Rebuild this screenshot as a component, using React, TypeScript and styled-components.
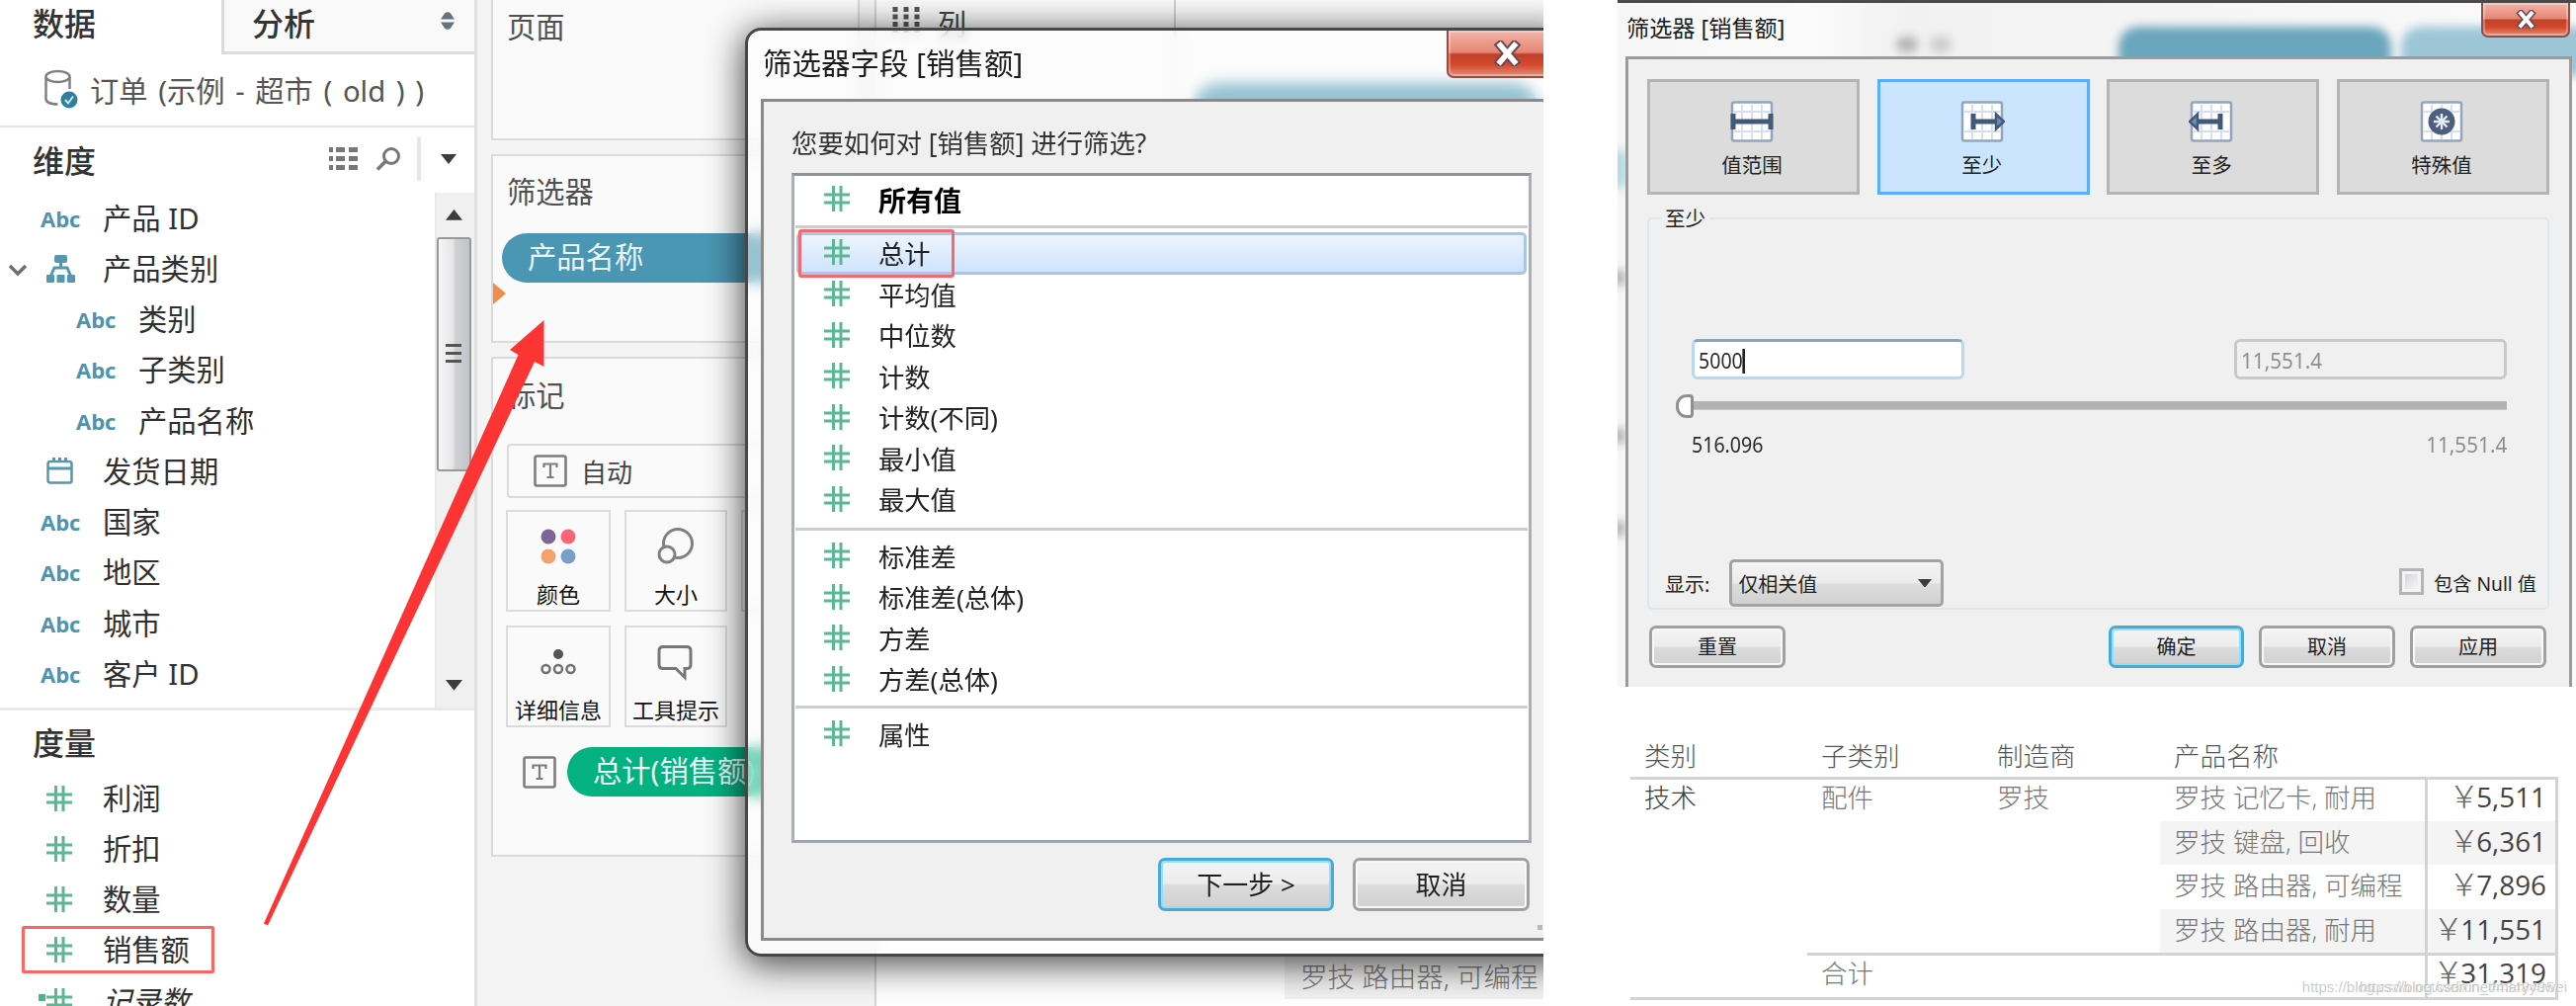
import React from 'react';
import styled, { createGlobalStyle, css } from 'styled-components';

const GlobalStyle = createGlobalStyle`
  *,
  *::after {
    box-sizing: border-box;
  }

  body {
    margin: 0;
    background: #fff;
    font-family: 'Noto Sans', 'Noto Sans CJK SC', sans-serif;
    color: #333;
  }
`;

const Page = styled.div`
  display: flex;
  gap: 75px;
  width: 2607px;
  height: 1018px;
  overflow: hidden;
`;

const Workspace = styled.section`
  position: relative;
  display: flex;
  width: 1562px;
  height: 1018px;
  overflow: hidden;
  background: #f4f4f4;
`;

/* ---------- data pane ---------- */

const DataPane = styled.aside`
  display: flex;
  flex-direction: column;
  flex: none;
  width: 483px;
  height: 1018px;
  overflow: hidden;
  background: #fff;
  border-right: 3px solid #dfe0e0;
`;

const Tabs = styled.div`
  display: flex;
  flex: none;
  height: 55px;
`;

const Tab = styled.div<{ $active?: boolean }>`
  display: flex;
  justify-content: space-between;
  padding: 0 20px 0 ${(p) => (p.$active ? 33 : 28)}px;
  width: ${(p) => (p.$active ? 224 : 256)}px;
  font-size: 32px;
  font-weight: 500;
  line-height: 48px;
  ${(p) =>
    !p.$active &&
    css`
      background: #f9f9f9;
      border-left: 3px solid #dcdcdc;
      border-bottom: 3px solid #dcdcdc;
    `}

  svg {
    margin-top: 12px;
  }
`;

const Source = styled.div`
  display: flex;
  flex: none;
  align-items: center;
  gap: 12px;
  height: 74px;
  padding: 0 0 2px 45px;
  border-bottom: 2px solid #e6e6e6;
  font-size: 29.3px;
  word-spacing: 3px;
  color: #555;
  white-space: pre;
`;

const PaneHeader = styled.div<{ $height: number }>`
  display: flex;
  flex: none;
  align-items: center;
  height: ${(p) => p.$height}px;
  padding: 0 18px 2px 33px;
  font-size: 32px;
  font-weight: 500;
`;

const HeaderTools = styled.div`
  display: flex;
  align-items: center;
  margin-left: auto;
`;

const Divider = styled.span`
  width: 4px;
  height: 44px;
  margin: 0 20px 0 17px;
  background: #e6e6e6;
`;

const DimensionBody = styled.div`
  display: flex;
  flex: none;
  height: 524px;
  border-bottom: 3px solid #eaeaea;
`;

const FieldList = styled.div`
  flex: 1;
`;

const FieldRow = styled.div<{ $nested?: boolean; $italic?: boolean; $marked?: boolean }>`
  position: relative;
  display: flex;
  flex: none;
  align-items: center;
  height: 51.25px;
  padding-left: ${(p) => (p.$nested ? 36 : 0)}px;
  font-size: 29.3px;
  line-height: 40px;
  font-style: ${(p) => (p.$italic ? 'italic' : 'normal')};
  color: #2f2f2f;

  ${(p) =>
    p.$marked &&
    css`
      &::after {
        content: '';
        position: absolute;
        left: 22px;
        top: 1px;
        width: 195px;
        height: 48px;
        border: 3px solid #ff6464;
        border-radius: 2px;
      }
    `}
`;

const FieldIcon = styled.span`
  position: relative;
  display: flex;
  align-items: center;
  justify-content: flex-start;
  width: 104px;
  padding-left: 41px;

  svg {
    margin-left: 6px;
  }
`;

const Abc = styled.span`
  font-family: 'Open Sans', sans-serif;
  font-size: 22px;
  font-weight: 700;
  color: #4f93ad;
`;

const Expander = styled.span`
  position: absolute;
  left: -1px;
  top: 9px;
  display: flex;
`;

const CalcMark = styled.span`
  position: absolute;
  left: 39px;
  top: 6px;
  width: 7px;
  height: 7px;
  background: #4fb48e;
`;

const ScrollBar = styled.div`
  display: flex;
  flex-direction: column;
  align-items: center;
  justify-content: space-between;
  width: 40px;
  padding: 17px 4px 17px 0;
  background: #f0f0f0;
  border-left: 2px solid #e8e8e8;
`;

const Thumb = styled.div`
  display: flex;
  align-items: center;
  justify-content: center;
  width: 35px;
  height: 237px;
  margin: 17px 0 auto;
  border: 2px solid #999;
  border-radius: 3px;
  background: linear-gradient(90deg, #f6f6f6 0%, #e6e6e8 45%, #cfd0d3 55%, #c3c4c8 100%);
`;

/* ---------- shelves ---------- */

const Shelves = styled.div`
  display: flex;
  flex-direction: column;
  gap: 14px;
  flex: none;
  width: 404px;
  padding: 0 15px 0 14px;
  border-right: 2px solid #d4d4d4;
`;

const Card = styled.div<{ $height: number }>`
  position: relative;
  flex: none;
  height: ${(p) => p.$height}px;
  border: 2px solid #dadada;
  background: #fafafa;
`;

const PageCard = styled(Card)`
  border-top: 0;
`;

const CardTitle = styled.div<{ $top: number }>`
  padding: ${(p) => p.$top}px 0 0 14px;
  font-size: 29.3px;
  line-height: 40px;
  color: #505050;
`;

const Pill = styled.div<{ $color: string }>`
  flex: 1;
  height: 50px;
  padding-left: 26px;
  border-radius: 25px;
  background: ${(p) => p.$color};
  color: #e9f5f5;
  font-size: 29.3px;
  line-height: 48px;
  white-space: nowrap;
`;

const PillRow = styled.div`
  display: flex;
  align-items: center;
  gap: 11px;
  margin: 20px 8px 0 30px;
`;

const FilterPillRow = styled(PillRow)`
  margin: 22px 8px 0 9px;
`;

const DropMark = styled.span`
  display: block;
  width: 0;
  border: 11px solid transparent;
  border-left: 13px solid #f08d49;
  border-right: 0;
`;

const MarkType = styled.div`
  display: flex;
  align-items: center;
  gap: 14px;
  height: 55px;
  margin: 29px 14px 0;
  padding-left: 25px;
  border: 2px solid #dadada;
  border-radius: 4px;
  font-size: 26px;
  color: #444;
`;

const MarkGrid = styled.div`
  display: grid;
  grid-template-columns: 106px 104px 104px;
  gap: 14px;
  padding: 12px 0 0 13px;
`;

const MarkButton = styled.div`
  display: flex;
  flex-direction: column;
  align-items: center;
  height: 103px;
  padding-top: 14px;
  border: 2px solid #dcdcdc;
  font-size: 22px;
  line-height: 28px;
  color: #111;
  white-space: nowrap;

  svg {
    flex: none;
    margin-bottom: 11px;
  }
`;

/* ---------- canvas behind the dialog ---------- */

const Canvas = styled.div`
  flex: 1;
  display: flex;
  flex-direction: column;
  justify-content: space-between;
  background: #fff;
`;

const ColumnShelf = styled.div`
  display: grid;
  grid-template-columns: 303px 1fr;
  height: 160px;
  background: #fafafa;
`;

const ShelfLabel = styled.div`
  display: flex;
  gap: 18px;
  padding: 7px 0 0 16px;
  border-right: 2px solid #d0d0d0;
  font-size: 29px;
  line-height: 36px;
  color: #444;
`;

const ShelfPills = styled.div`
  display: flex;
  padding: 84px 6px 0 18px;
`;

const BehindRow = styled.div`
  width: 262px;
  height: 45px;
  margin: 0 0 7px auto;
  padding-left: 16px;
  background: #f2f2f2;
  font-size: 27.5px;
  font-weight: 300;
  line-height: 46px;
  color: #777;
  white-space: nowrap;
`;

const DragArrow = styled.svg`
  position: absolute;
  left: 260px;
  top: 320px;
`;

/* ---------- field dialog ---------- */

const FieldDialog = styled.div`
  position: absolute;
  left: 754px;
  top: 28px;
  width: 840px;
  height: 940px;
  padding: 0 0 14px 13px;
  border: 3px solid #474747;
  border-radius: 16px;
  background: rgba(255, 255, 255, 0.42);
  backdrop-filter: blur(7px);
  box-shadow: 0 6px 36px 2px rgba(0, 0, 0, 0.72);
`;

const DialogTitle = styled.div`
  display: flex;
  justify-content: space-between;
  height: 69px;
  padding-left: 2px;
  font-size: 29.5px;
  line-height: 66px;
  color: #1c1c1c;
`;

const CloseButton = styled.div<{ $width: number; $height: number }>`
  display: flex;
  align-items: center;
  justify-content: center;
  width: ${(p) => p.$width}px;
  height: ${(p) => p.$height}px;
  border: 2px solid #8d5049;
  border-top: 0;
  border-radius: 0 0 7px 7px;
  background: linear-gradient(#f3b5a8 0%, #e58674 48%, #c0402a 52%, #d4492c 75%, #e0907c 100%);
  box-shadow: inset 0 0 0 2px rgba(255, 255, 255, 0.3);
`;

const FieldCloseButton = styled(CloseButton)`
  padding-right: 5px;
`;

const FieldClient = styled.div`
  height: 852px;
  padding: 23px 0 0 28px;
  border: 3px solid #8a8a8a;
  border-right: 0;
  background: #f0f0f0;
`;

const Question = styled.div`
  height: 49px;
  font-size: 26.4px;
  line-height: 38px;
  color: #333;
`;

const OptionList = styled.div`
  width: 749px;
  height: 678px;
  padding: 1px 2px 0;
  border: 3px solid #8d929c;
  border-color: #8d929c #a9aeb8 #a0a5ae;
  background: #fff;
`;

const Option = styled.div<{ $state?: 'bold' | 'selected' }>`
  position: relative;
  display: flex;
  align-items: center;
  gap: 29px;
  height: 41.5px;
  padding-left: 28px;
  border: 0 solid #a9c5ea;
  font-size: 26.3px;
  line-height: 36px;
  color: #222;

  svg {
    margin-top: -3px;
  }

  ${(p) =>
    p.$state === 'bold' &&
    css`
      height: 47px;
      font-size: 28px;
      font-weight: 700;
      line-height: 34px;
      color: #000;
    `}

  ${(p) =>
    p.$state === 'selected' &&
    css`
      height: 43px;
      padding-left: 25px;
      border-width: 3px;
      border-radius: 5px;
      background: linear-gradient(#ecf4fe, #cfe3fd);

      &::after {
        content: '';
        position: absolute;
        left: -1px;
        top: -6px;
        width: 158px;
        height: 49px;
        border: 3px solid #f26a70;
        border-radius: 3px;
      }
    `}
`;

const Separator = styled.hr<{ $before: number; $after: number }>`
  height: 3px;
  margin: ${(p) => p.$before}px -1px ${(p) => p.$after}px;
  border: 0;
  background: #cdcdcd;
`;

const FieldFooter = styled.div`
  display: flex;
  gap: 19px;
  padding: 15px 0 0 371px;
`;

const Button = styled.button<{ $width: number; $height: number; $primary?: boolean }>`
  width: ${(p) => p.$width}px;
  height: ${(p) => p.$height}px;
  padding: 0;
  border: 3px solid ${(p) => (p.$primary ? '#4aa9d6' : '#a0a0a0')};
  border-radius: 7px;
  background: linear-gradient(#f4f4f4 0%, #ececec 48%, #dcdcdc 52%, #d0d0d0 100%);
  box-shadow: inset 0 0 0 2px ${(p) => (p.$primary ? '#8fe0f8' : '#f8f8f8')};
  font-family: inherit;
  font-size: ${(p) => (p.$height > 50 ? 26 : 20)}px;
  line-height: 1;
  color: #1e1e1e;
`;

const Grip = styled.span`
  position: absolute;
  left: 799px;
  top: 905px;
  width: 5px;
  height: 5px;
  background: #b8b8b8;
  box-shadow: 6px -7px 0 #b8b8b8, 6px 0 0 #b8b8b8;
`;

/* ---------- range dialog ---------- */

const ResultColumn = styled.section`
  display: flex;
  flex-direction: column;
  width: 970px;
`;

const RangeDialog = styled.div`
  position: relative;
  height: 695px;
  padding: 0 4px 0 8px;
  overflow: hidden;
  border-top: 3px solid #4a4a4a;
  background: linear-gradient(90deg, #f6f6f6, #fbfbfb 20%, #f1f1f1 30%, #fafafa);
`;

/* what shines through the glass frame */
const Glimpse = styled.span<{ $x: number; $y: number; $w: number; $h: number; $color: string }>`
  position: absolute;
  left: ${(p) => p.$x}px;
  top: ${(p) => p.$y}px;
  width: ${(p) => p.$w}px;
  height: ${(p) => p.$h}px;
  border-radius: 20px;
  background: ${(p) => p.$color};
  filter: blur(5px);
`;

const RangeTitle = styled.div`
  position: relative;
  display: flex;
  justify-content: space-between;
  height: 54px;
  padding: 0 2px 0 1px;
  font-size: 23.2px;
  line-height: 50px;
  color: #1c1c1c;
`;

const RangeClient = styled.div`
  position: relative;
  height: 640px;
  padding: 20px 20px 0 19px;
  border: 3px solid #9b9b9b;
  border-bottom: 0;
  background: #f0f0f0;
`;

const ModeRow = styled.div`
  display: flex;
  justify-content: space-between;
  height: 117px;
`;

const Mode = styled.div<{ $active?: boolean }>`
  display: flex;
  flex-direction: column;
  align-items: center;
  gap: 8px;
  width: 215px;
  padding: 19px 3px 0 0;
  border: 3px solid ${(p) => (p.$active ? '#58adff' : '#b4b4b4')};
  background: ${(p) => (p.$active ? '#cce5ff' : '#dcdcdc')};
  font-size: 20.5px;
  line-height: 30px;
  color: #222;
`;

const Group = styled.fieldset`
  height: 414px;
  margin: 6px 0 0;
  padding: 0 41px 0 43px;
  min-width: 0;
  border: 2px solid #dfe7ee;
  border-radius: 5px;
`;

const Legend = styled.legend`
  margin-left: -31px;
  padding: 0 4px;
  font-size: 20.5px;
  line-height: 36px;
  color: #222;
`;

const Spread = styled.div<{ $top: number }>`
  display: flex;
  justify-content: space-between;
  margin-top: ${(p) => p.$top}px;
`;

const NumberBox = styled.div<{ $disabled?: boolean }>`
  width: 276px;
  height: 41px;
  padding-left: 4px;
  border: 3px solid ${(p) => (p.$disabled ? '#c9c9c9' : '#b7d8ee')};
  border-top-color: ${(p) => (p.$disabled ? '#c9c9c9' : '#7ea9cb')};
  border-radius: 6px;
  background: ${(p) => (p.$disabled ? '#f0f0f0' : '#fff')};
  line-height: 38px;
`;

const Figure = styled.span<{ $muted?: boolean; $caret?: boolean; $right?: boolean }>`
  display: inline-block;
  font-size: 22.5px;
  color: ${(p) => (p.$muted ? '#8f8f8f' : '#2b2b2b')};
  transform: scaleX(${(p) => (p.$muted ? 0.92 : 0.87)});
  transform-origin: ${(p) => (p.$right ? 'right' : 'left')};
  ${(p) =>
    p.$caret &&
    css`
      &::after {
        content: '';
        display: inline-block;
        width: 3px;
        height: 25px;
        vertical-align: -5px;
        background: #222;
      }
    `}
`;

const Slider = styled.div`
  display: flex;
  align-items: center;
  height: 24px;
  margin: 15px 0 0 -16px;
`;

const SliderHandle = styled.span`
  width: 18px;
  height: 24px;
  border: 3px solid #8f8f8f;
  border-radius: 11px 4px 4px 11px;
  background: #fff;
`;

const SliderTrack = styled.span`
  flex: 1;
  height: 9px;
  margin-bottom: 2px;
  background: #b2b2b2;
  border-bottom: 1px solid #c8c8c8;
`;

const ShowRow = styled.div`
  display: flex;
  align-items: center;
  height: 48px;
  margin: 101px -30px 0 -27px;
  font-size: 20px;
  color: #222;
`;

const Select = styled.div`
  display: flex;
  align-items: center;
  justify-content: space-between;
  width: 217px;
  height: 48px;
  margin-left: 20px;
  padding: 0 9px 0 6px;
  border: 3px solid #a3a3a3;
  border-radius: 5px;
  background: linear-gradient(#f4f4f4, #ebebeb 50%, #dedede 52%, #d0d0d0);
`;

const CheckBox = styled.span`
  width: 25px;
  height: 27px;
  margin: 0 10px 4px auto;
  border: 3px solid #b5b5b5;
  background: linear-gradient(135deg, #c9ced6, #fff);
  box-shadow: inset 0 0 0 3px #f4f4f4;
`;

const CheckLabel = styled.span`
  font-size: 19.2px;
`;

const RangeFooter = styled.div`
  display: flex;
  gap: 15px;
  padding: 16px 3px 0 2px;

  button:first-child {
    margin-right: auto;
  }
`;

/* ---------- result table ---------- */

const ResultTable = styled.div`
  display: grid;
  grid-template-columns: 179px 178px 179px 268px 135px;
  grid-template-rows: 39px repeat(5, 44.6px);
  width: 939px;
  margin: 52px 0 0 13px;
  border-bottom: 3px solid #d3d3d3;
`;

const Cell = styled.div<{ $from?: number; $band?: boolean; $line?: boolean; $strong?: boolean }>`
  grid-column-start: ${(p) => p.$from ?? 'auto'};
  padding-left: 14px;
  font-family: 'Open Sans', 'Noto Sans CJK SC', sans-serif;
  font-size: 26.5px;
  font-weight: 300;
  line-height: ${(p) => (p.$line ? 36 : 42)}px;
  white-space: nowrap;
  color: ${(p) => (p.$strong ? '#3c3c3c' : '#777')};
  background: ${(p) => (p.$band ? '#f4f4f4' : 'transparent')};
  border-top: ${(p) => (p.$line ? '3px solid #d3d3d3' : '0')};
`;

const HeadCell = styled(Cell)`
  line-height: 37px;
  color: #555;
`;

const ValueCell = styled(Cell)`
  padding: 0 9px 0 0;
  border-left: 3px solid #d3d3d3;
  border-right: 3px solid #d3d3d3;
  font-size: 27.8px;
  font-weight: 400;
  line-height: ${(p) => (p.$line ? 35 : 40)}px;
  text-align: right;
  color: #444;
`;

const Yen = styled.span`
  margin-right: -3px;
  font-size: 31px;
  line-height: 1;
  font-weight: 300;
  color: #666;
`;

const Watermark = styled.span<{ $right: number }>`
  position: absolute;
  right: ${(p) => p.$right}px;
  top: 989px;
  font-family: 'Liberation Sans', sans-serif;
  font-size: 15px;
  line-height: 20px;
  color: rgba(190, 190, 190, 0.8);
  text-shadow: 1px 1px 0 #fff;
`;

/* ---------- icons ---------- */

const HashIcon = () => (
  <svg width="26" height="26" viewBox="0 0 26 26" fill="none" stroke="#5cb894" strokeWidth="3">
    <path d="M9.5 0v26M17 0v26" />
    <path d="M0 9h26M0 17h26" />
  </svg>
);

const DatabaseIcon = () => (
  <svg width="34" height="40" viewBox="0 0 34 40" fill="none" stroke="#808080" strokeWidth="2.5">
    <ellipse cx="13.5" cy="7.5" rx="12" ry="5.5" />
    <path d="M1.5 8v22c0 3 4 5.5 12 5.5M25.5 8v12" />
    <circle cx="25" cy="31" r="8.5" fill="#2f7f9f" stroke="none" />
    <path d="m21 31 3 3.5 5-7" stroke="#cfe6ee" strokeWidth="2" />
  </svg>
);

const HierarchyIcon = () => (
  <svg width="29" height="28" viewBox="0 0 29 28" fill="#5597b0">
    <rect x="8" y="0" width="13" height="8" rx="2" />
    <rect x="0" y="20" width="8" height="8" rx="1" />
    <rect x="10.5" y="20" width="8" height="8" rx="1" />
    <rect x="21" y="20" width="8" height="8" rx="1" />
    <path d="M14.5 8v5M4.5 21l3.5-8h13l3.5 8" fill="none" stroke="#5597b0" strokeWidth="3" />
  </svg>
);

const CalendarIcon = () => (
  <svg width="27" height="27" viewBox="0 0 27 27" fill="none" stroke="#5597b0" strokeWidth="2.5">
    <rect x="1.5" y="4" width="24" height="21.5" rx="2.5" />
    <path d="M2 11h23" strokeWidth="3" />
    <path d="M7.5 0v5M13.5 0v5M19.5 0v5" strokeWidth="3" />
  </svg>
);

const GridIcon = () => (
  <svg width="30" height="24" viewBox="0 0 30 24" fill="#777">
    {[0, 9, 18].map((y) => (
      <React.Fragment key={y}>
        <rect x="0" y={y} width="4" height="5" />
        <rect x="7" y={y} width="9" height="5" />
        <rect x="20" y={y} width="9" height="5" />
      </React.Fragment>
    ))}
  </svg>
);

const SearchSvg = styled.svg`
  margin-left: 18px;
`;

const SearchIcon = () => (
  <SearchSvg width="24" height="24" viewBox="0 0 24 24" fill="none" stroke="#777" strokeWidth="3">
    <circle cx="15" cy="9" r="7.5" />
    <path d="M9 14.5 1 22.5" strokeWidth="3.5" />
  </SearchSvg>
);

const Triangle = ({ up, size = 16 }: { up?: boolean; size?: number }) => (
  <svg width={size} height={size * 0.63} viewBox="0 0 16 10" fill="#3c3c3c">
    <path d={up ? 'M0 10 8 0l8 10z' : 'M0 0h16L8 10z'} />
  </svg>
);

const TextIcon = () => (
  <svg width="34" height="33" viewBox="0 0 34 33" fill="none" stroke="#7d7d7d" strokeWidth="2.6">
    <rect x="1.5" y="1.5" width="31" height="30" rx="2" />
    <path d="M10.5 13V9.5h13V13M17 9.5V23M13.5 23h7" strokeWidth="2.2" />
  </svg>
);

const CloseIcon = ({ size }: { size: number }) => (
  <svg width={size} height={size * 0.85} viewBox="0 0 26 22" fill="none" strokeLinecap="square">
    <path d="M7 4l12 14M19 4 7 18" stroke="#6a4a50" strokeWidth="8" />
    <path d="M7 4l12 14M19 4 7 18" stroke="#fff" strokeWidth="4.6" />
  </svg>
);

type ModeKind = 'range' | 'least' | 'most' | 'special';

const ModeIcon = ({ kind }: { kind: ModeKind }) => (
  <svg width="46" height="42" viewBox="0 0 46 42" fill="none">
    <rect x="3" y="1.5" width="40" height="39" rx="2" fill="#fff" stroke="#93a5ba" strokeWidth="2.5" />
    <path d="M13 4v35M23 4v35M33 4v35M5 11h36M5 31h36" stroke="#d5dfef" strokeWidth="2" />
    {kind === 'range' && (
      <path d="M4 13v16M42 13v16M4 21h38" stroke="#42597a" strokeWidth="5" />
    )}
    {kind === 'least' && (
      <>
        <path d="M14 13v16M14 21h24" stroke="#42597a" strokeWidth="5" />
        <path d="M37 13.5 45 21l-8 7.5z" fill="#6f8db5" stroke="#42597a" strokeWidth="2.5" />
      </>
    )}
    {kind === 'most' && (
      <>
        <path d="M32 13v16M32 21H8" stroke="#42597a" strokeWidth="5" />
        <path d="M9 13.5 1 21l8 7.5z" fill="#6f8db5" stroke="#42597a" strokeWidth="2.5" />
      </>
    )}
    {kind === 'special' && (
      <>
        <circle cx="23" cy="21" r="13.5" fill="#4c607e" />
        <path d="M23 13v16M15 21h16M17.5 15.5l11 11M28.5 15.5l-11 11" stroke="#e3eaf3" strokeWidth="2.4" />
      </>
    )}
  </svg>
);

/* ---------- data ---------- */

type Field = { name: string; icon?: React.ReactNode; nested?: boolean; open?: boolean };

const dimensions: Field[] = [
  { name: '产品 ID' },
  { name: '产品类别', icon: <HierarchyIcon />, open: true },
  { name: '类别', nested: true },
  { name: '子类别', nested: true },
  { name: '产品名称', nested: true },
  { name: '发货日期', icon: <CalendarIcon /> },
  { name: '国家' },
  { name: '地区' },
  { name: '城市' },
  { name: '客户 ID' },
];

const measures = ['利润', '折扣', '数量', '销售额', '记录数'];

const aggregates = ['平均值', '中位数', '计数', '计数(不同)', '最小值', '最大值'];
const spreads = ['标准差', '标准差(总体)', '方差', '方差(总体)'];

const modes: { kind: ModeKind; label: string }[] = [
  { kind: 'range', label: '值范围' },
  { kind: 'least', label: '至少' },
  { kind: 'most', label: '至多' },
  { kind: 'special', label: '特殊值' },
];

const products = [
  { name: '罗技 记忆卡, 耐用', sales: '5,511' },
  { name: '罗技 键盘, 回收', sales: '6,361' },
  { name: '罗技 路由器, 可编程', sales: '7,896' },
  { name: '罗技 路由器, 耐用', sales: '11,551' },
];

/* ---------- parts ---------- */

const DataPanel = () => (
  <DataPane>
    <Tabs>
      <Tab $active>数据</Tab>
      <Tab>
        分析
        <svg width="14" height="18" viewBox="0 0 14 18" fill="#66737f">
          <path d="M0 7.5 4 1.5Q7-1 10 1.5l4 6zM0 10.5l4 6Q7 19 10 16.5l4-6z" />
        </svg>
      </Tab>
    </Tabs>
    <Source>
      <DatabaseIcon />
      订单 (示例 - 超市 ( old ) )
    </Source>
    <PaneHeader $height={66}>
      维度
      <HeaderTools>
        <GridIcon />
        <SearchIcon />
        <Divider />
        <Triangle />
      </HeaderTools>
    </PaneHeader>
    <DimensionBody>
      <FieldList>
        {dimensions.map((field) => (
          <FieldRow key={field.name} $nested={field.nested}>
            <FieldIcon>
              {field.open && (
                <Expander>
                  <svg width="26" height="14" viewBox="0 0 26 14" fill="none" stroke="#6f6f6f" strokeWidth="3.5">
                    <path d="m5 2 8 8 8-8" />
                  </svg>
                </Expander>
              )}
              {field.icon ?? <Abc>Abc</Abc>}
            </FieldIcon>
            {field.name}
          </FieldRow>
        ))}
      </FieldList>
      <ScrollBar>
        <Triangle up size={17} />
        <Thumb>
          <svg width="16" height="20" viewBox="0 0 16 20" fill="#555">
            <path d="M0 0h16v3H0zM0 8h16v3H0zM0 16h16v3H0z" />
          </svg>
        </Thumb>
        <Triangle size={17} />
      </ScrollBar>
    </DimensionBody>
    <PaneHeader $height={63}>度量</PaneHeader>
    {measures.map((name) => (
      <FieldRow key={name} $marked={name === '销售额'} $italic={name === '记录数'}>
        <FieldIcon>
          {name === '记录数' && <CalcMark />}
          <HashIcon />
        </FieldIcon>
        {name}
      </FieldRow>
    ))}
  </DataPane>
);

const ShelfPanel = () => (
  <Shelves>
    <PageCard $height={142}>
      <CardTitle $top={7}>页面</CardTitle>
    </PageCard>
    <Card $height={191}>
      <CardTitle $top={16}>筛选器</CardTitle>
      <FilterPillRow>
        <Pill $color="#4a96b3">产品名称</Pill>
      </FilterPillRow>
      <DropMark />
    </Card>
    <Card $height={506}>
      <CardTitle $top={17}>标记</CardTitle>
      <MarkType>
        <TextIcon />
        自动
      </MarkType>
      <MarkGrid>
        <MarkButton>
          <svg width="40" height="44" viewBox="0 0 40 44">
            <circle cx="10" cy="11" r="7.5" fill="#7d6596" />
            <circle cx="30" cy="11" r="7.5" fill="#fa6577" />
            <circle cx="10" cy="31" r="7.5" fill="#f2a26e" />
            <circle cx="30" cy="31" r="7.5" fill="#779fc9" />
          </svg>
          颜色
        </MarkButton>
        <MarkButton>
          <svg width="40" height="44" viewBox="0 0 40 44" fill="#fafafa" stroke="#808080" strokeWidth="3">
            <circle cx="22" cy="18" r="14.5" />
            <circle cx="11" cy="29" r="8" />
          </svg>
          大小
        </MarkButton>
        <MarkButton />
        <MarkButton>
          <svg width="40" height="44" viewBox="0 0 40 44" fill="none" stroke="#707070" strokeWidth="2.5">
            <circle cx="20" cy="13" r="5" fill="#555" stroke="none" />
            <circle cx="7.5" cy="28" r="4" />
            <circle cx="20" cy="28" r="4" />
            <circle cx="32.5" cy="28" r="4" />
          </svg>
          详细信息
        </MarkButton>
        <MarkButton>
          <svg width="40" height="44" viewBox="0 0 40 44" fill="none" stroke="#777" strokeWidth="3">
            <path d="M7 5.5h24q4 0 4 4v14q0 4-4 4h-2v9l-9-9H7q-4 0-4-4v-14q0-4 4-4z" />
          </svg>
          工具提示
        </MarkButton>
      </MarkGrid>
      <PillRow>
        <TextIcon />
        <Pill $color="#04b181">总计(销售额)</Pill>
      </PillRow>
    </Card>
  </Shelves>
);

const FieldOption = ({ label, state }: { label: string; state?: 'bold' | 'selected' }) => (
  <Option $state={state}>
    <HashIcon />
    {label}
  </Option>
);

const FilterFieldDialog = () => (
  <FieldDialog>
    <DialogTitle>
      筛选器字段 [销售额]
      <FieldCloseButton $width={127} $height={48}>
        <CloseIcon size={31} />
      </FieldCloseButton>
    </DialogTitle>
    <FieldClient>
      <Question>您要如何对 [销售额] 进行筛选?</Question>
      <OptionList>
        <FieldOption label="所有值" state="bold" />
        <Separator $before={2} $after={4} />
        <FieldOption label="总计" state="selected" />
        {aggregates.map((label) => (
          <FieldOption key={label} label={label} />
        ))}
        <Separator $before={7} $after={6} />
        {spreads.map((label) => (
          <FieldOption key={label} label={label} />
        ))}
        <Separator $before={5} $after={6} />
        <FieldOption label="属性" />
      </OptionList>
      <FieldFooter>
        <Button $width={178} $height={54} $primary>
          下一步 &gt;
        </Button>
        <Button $width={179} $height={54}>
          取消
        </Button>
      </FieldFooter>
    </FieldClient>
    <Grip />
  </FieldDialog>
);

const FilterRangeDialog = () => (
  <RangeDialog>
    <Glimpse $x={282} $y={34} $w={22} $h={16} $color="#b4b4b4" />
    <Glimpse $x={316} $y={34} $w={22} $h={16} $color="#ccc" />
    <Glimpse $x={507} $y={24} $w={276} $h={50} $color="#6aa6bd" />
    <Glimpse $x={793} $y={24} $w={220} $h={50} $color="#9cc6d6" />
    <Glimpse $x={-8} $y={148} $w={18} $h={40} $color="#b4d9e2" />
    <Glimpse $x={-6} $y={270} $w={14} $h={16} $color="#aaa" />
    <Glimpse $x={-6} $y={430} $w={14} $h={16} $color="#aaa" />
    <Glimpse $x={-6} $y={524} $w={14} $h={16} $color="#aaa" />
    <RangeTitle>
      筛选器 [销售额]
      <CloseButton $width={90} $height={35}>
        <CloseIcon size={23} />
      </CloseButton>
    </RangeTitle>
    <RangeClient>
      <ModeRow>
        {modes.map((mode) => (
          <Mode key={mode.kind} $active={mode.kind === 'least'}>
            <ModeIcon kind={mode.kind} />
            {mode.label}
          </Mode>
        ))}
      </ModeRow>
      <Group>
        <Legend>至少</Legend>
        <Spread $top={104}>
          <NumberBox>
            <Figure $caret>5000</Figure>
          </NumberBox>
          <NumberBox $disabled>
            <Figure $muted>11,551.4</Figure>
          </NumberBox>
        </Spread>
        <Slider>
          <SliderHandle />
          <SliderTrack />
        </Slider>
        <Spread $top={11}>
          <Figure>516.096</Figure>
          <Figure $muted $right>
            11,551.4
          </Figure>
        </Spread>
        <ShowRow>
          显示:
          <Select>
            仅相关值
            <Triangle size={14} />
          </Select>
          <CheckBox />
          <CheckLabel>包含 Null 值</CheckLabel>
        </ShowRow>
      </Group>
      <RangeFooter>
        <Button $width={138} $height={43}>
          重置
        </Button>
        <Button $width={137} $height={43} $primary>
          确定
        </Button>
        <Button $width={138} $height={43}>
          取消
        </Button>
        <Button $width={138} $height={43}>
          应用
        </Button>
      </RangeFooter>
    </RangeClient>
  </RangeDialog>
);

const Results = () => (
  <ResultTable>
    <HeadCell>类别</HeadCell>
    <HeadCell>子类别</HeadCell>
    <HeadCell>制造商</HeadCell>
    <HeadCell>产品名称</HeadCell>
    <HeadCell />
    {products.map((product, i) => (
      <React.Fragment key={product.name}>
        {i === 0 && (
          <>
            <Cell $line $strong>
              技术
            </Cell>
            <Cell $line>配件</Cell>
            <Cell $line>罗技</Cell>
          </>
        )}
        <Cell $from={4} $band={i % 2 === 1} $line={i === 0}>
          {product.name}
        </Cell>
        <ValueCell $band={i % 2 === 1} $line={i === 0}>
          <Yen>￥</Yen>
          {product.sales}
        </ValueCell>
      </React.Fragment>
    ))}
    <Cell $from={2} $line>
      合计
    </Cell>
    <Cell $line />
    <Cell $line />
    <ValueCell $line>
      <Yen>￥</Yen>31,319
    </ValueCell>
  </ResultTable>
);

const App = () => (
  <>
    <GlobalStyle />
    <Page>
      <Workspace>
        <DataPanel />
        <ShelfPanel />
        <Canvas>
          <ColumnShelf>
            <ShelfLabel>
              <svg width="28" height="26" viewBox="0 0 28 26" stroke="#555" strokeWidth="5" strokeDasharray="5 2.5">
                <path d="M3 0v26M14 0v26M25 0v26" />
              </svg>
              列
            </ShelfLabel>
            <ShelfPills>
              <Pill $color="#4a96b3" />
            </ShelfPills>
          </ColumnShelf>
          <BehindRow>罗技 路由器, 可编程</BehindRow>
        </Canvas>
        <DragArrow width="300" height="620" viewBox="0 0 300 620" fill="#fd3434">
          <path d="M290.5 4 256 34l8.5 5L7 614.5l4 2L281 46l9.5 5z" />
        </DragArrow>
        <FilterFieldDialog />
      </Workspace>
      <ResultColumn>
        <FilterRangeDialog />
        <Results />
        <Watermark $right={22}>https://blog.csdn.net/weixin_44348495</Watermark>
        <Watermark $right={9}>https://blog.csdn.net/maryyuwei</Watermark>
      </ResultColumn>
    </Page>
  </>
);

export default App;
